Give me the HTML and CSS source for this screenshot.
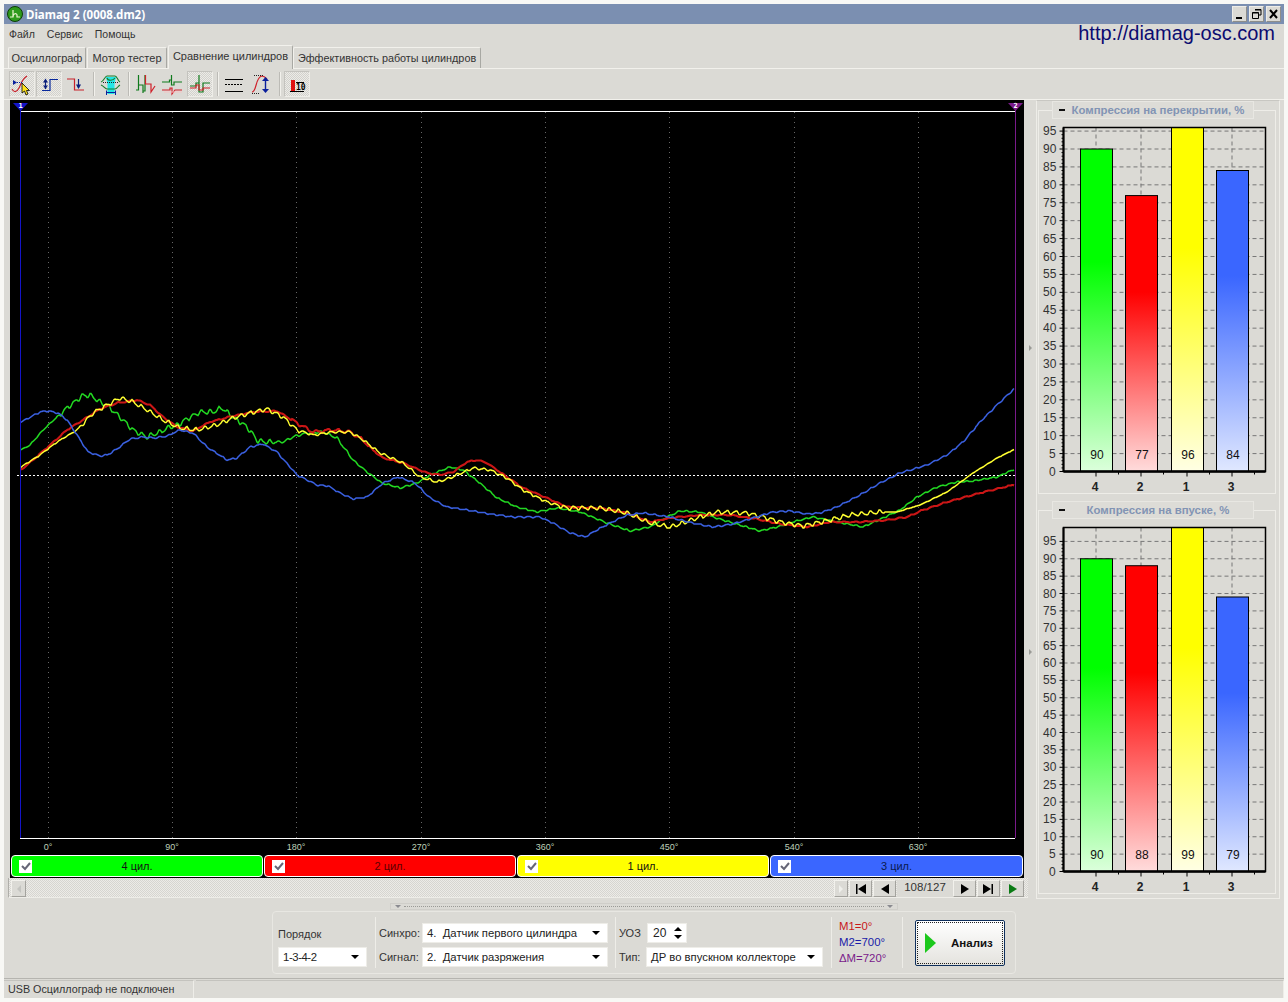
FILE: index.html
```html
<!DOCTYPE html>
<html lang="ru">
<head>
    <meta charset="UTF-8">
    <title>Diamag 2 (0008.dm2)</title>
    <link rel="stylesheet" href="styles.css">
</head>
<body>
    <div class="window">
        <div class="titlebar">
            <svg class="app-icon" width="16" height="16" viewBox="0 0 16 16">
                <circle cx="8" cy="8" r="7.5" fill="#2f9a1c" stroke="#0c3d08"/>
                <path d="M3 11H6V4M6 11C6 7 10 7 10 9V11H13" fill="none" stroke="#eef5d0" stroke-width="1.2"/>
            </svg>
            <span class="title-text">Diamag 2 (0008.dm2)</span>
            <div class="win-buttons">
                <div class="win-btn"><svg width="15" height="16" viewBox="0 0 15 16"><path d="M4 12H10" stroke="#000" stroke-width="2"/></svg></div>
                <div class="win-btn"><svg width="15" height="16" viewBox="0 0 15 16"><path d="M6 3.5H12V9H10M3.5 6.5H9.5V12.5H3.5ZM3.5 7H9.5M6 4H12" fill="none" stroke="#000"/></svg></div>
                <div class="win-btn"><svg width="15" height="16" viewBox="0 0 15 16"><path d="M4 4L11 12M11 4L4 12" stroke="#000" stroke-width="2"/></svg></div>
            </div>
        </div>

        <div class="menubar">
            <span class="menu-item">Файл</span>
            <span class="menu-item">Сервис</span>
            <span class="menu-item">Помощь</span>
            <span class="site-link">http://diamag-osc.com</span>
        </div>

        <div class="tabs">
            <div class="tab tab-1">Осциллограф</div>
            <div class="tab tab-2">Мотор тестер</div>
            <div class="tab tab-3 active">Сравнение цилиндров</div>
            <div class="tab tab-4">Эффективность работы цилиндров</div>
        </div>

        <div class="toolbar">
            <div class="tool pressed"><svg width="26" height="26" viewBox="0 0 26 26">
                <path d="M3 18C5 22 8 21 10 17C12 13 13 8 18 5" fill="none" stroke="#c8202a" stroke-width="1.2"/>
                <path d="M4 9L8 11.500L4 14Z" fill="#0a1f9c"/><path d="M8 11.500H14" stroke="#0a1f9c" stroke-dasharray="1 1"/>
                <path d="M13 12V22L15.500 20L17 24L19 23L17.500 19.500H20.500Z" fill="#ffe21c" stroke="#000" stroke-width=".8"/>
            </svg></div>
            <div class="tool pressed"><svg width="26" height="26" viewBox="0 0 26 26">
                <path d="M6 19.500H14V8.500H22" fill="none" stroke="#0a2a9c" stroke-width="1.2"/>
                <path d="M9.500 9V18" stroke="#0a1f7c" stroke-width="1.2"/>
                <path d="M9.500 7.500L7 11.500H12ZM7 14.500H12L9.500 18Z" fill="#0a1f7c"/>
            </svg></div>
            <div class="tool"><svg width="26" height="26" viewBox="0 0 26 26">
                <path d="M4 8H11.500V19H21" fill="none" stroke="#c8202a" stroke-width="1.2"/>
                <path d="M15.500 8V17" stroke="#0a1f7c" stroke-width="1.2"/><path d="M13 13.500H18L15.500 18Z" fill="#0a1f7c"/>
            </svg></div>
            <div class="tool-sep"></div>
            <div class="tool"><svg width="26" height="26" viewBox="0 0 26 26">
                <path d="M8 6H18L16.500 13V23H9.500V13Z" fill="#22e6e6"/>
                <path d="M3 11C6 10 7 5 9 5H17C19 5 20 10 22 11M3 14C6 15 7 18 9 18H17C19 18 20 15 22 14M9 7C10 10 15 10 17 7" fill="none" stroke="#187a28" stroke-width="1.1"/>
                <path d="M5 11.500H21" stroke="#222" stroke-dasharray="1 1"/>
                <path d="M9 21.500H17M8.500 19.500V24M17.500 19.500V24" stroke="#0a1f9c"/>
            </svg></div>
            <div class="tool-sep"></div>
            <div class="tool"><svg width="26" height="26" viewBox="0 0 26 26">
                <path d="M3 19H5.500V4V14H10V22M10 20H12V4V13" fill="none" stroke="#0f7a1c" stroke-width="1.2"/>
                <path d="M12.500 4V13H18V21L22 15" fill="none" stroke="#d0202a" stroke-width="1.2"/>
            </svg></div>
            <div class="tool"><svg width="26" height="26" viewBox="0 0 26 26">
                <path d="M2 11H9.500V9H11.500V4V14H14V11H22" fill="none" stroke="#0f7a1c" stroke-width="1.2"/>
                <path d="M2 19H10V17H12V23L15 19H22" fill="none" stroke="#d0202a" stroke-width="1.2"/>
                <path d="M4 21H22" stroke="#f6c4c4"/>
            </svg></div>
            <div class="tool pressed"><svg width="26" height="26" viewBox="0 0 26 26">
                <path d="M3 15H9V12H12V4V21H16V12H23" fill="none" stroke="#0f7a1c" stroke-width="1.2"/>
                <path d="M3 17H9V14H12V19H16V17H23" fill="none" stroke="#d0202a" stroke-width="1.2"/>
            </svg></div>
            <div class="tool-sep"></div>
            <div class="tool"><svg width="26" height="26" viewBox="0 0 26 26">
                <path d="M3 8.500H21M3 20.500H21" stroke="#000"/><path d="M3 13.500H21" stroke="#000" stroke-dasharray="2 1"/>
            </svg></div>
            <div class="tool"><svg width="26" height="26" viewBox="0 0 26 26">
                <path d="M3 21C8 21 6 6 13 5C15 5 16 6 18 8" fill="none" stroke="#d0202a" stroke-width="1.2"/>
                <path d="M5 4.500H14M3 22.500H11" stroke="#222" stroke-dasharray="1 1"/>
                <path d="M16.500 8V20" stroke="#0a1f9c" stroke-width="1.4"/><path d="M13 10L16.500 6L20 10ZM13 18H20L16.500 22Z" fill="#0a1f9c"/>
            </svg></div>
            <div class="tool-sep"></div>
            <div class="tool pressed"><svg width="26" height="26" viewBox="0 0 26 26">
                <rect x="7" y="9" width="4" height="11" fill="#e01010"/>
                <path d="M12 11.500H20M6 20.500H20" stroke="#000"/>
                <text x="12" y="19" class="tool-number">10</text>
            </svg></div>
        </div>

        <div class="workspace">
            <div class="scope-col">
                <div class="scope">
                    <svg id="scopeSvg" class="scope-svg" width="1014" height="755" viewBox="10 100 1014 755"></svg>
                    <div class="legend">
                        <div class="legend-item cyl-green"><span class="check"><svg width="10" height="10" viewBox="0 0 10 10"><path d="M1 5L4 8L9 2" fill="none" stroke="#667" stroke-width="2"/></svg></span><span class="legend-label">4 цил.</span></div>
                        <div class="legend-item cyl-red"><span class="check"><svg width="10" height="10" viewBox="0 0 10 10"><path d="M1 5L4 8L9 2" fill="none" stroke="#667" stroke-width="2"/></svg></span><span class="legend-label">2 цил.</span></div>
                        <div class="legend-item cyl-yellow"><span class="check"><svg width="10" height="10" viewBox="0 0 10 10"><path d="M1 5L4 8L9 2" fill="none" stroke="#667" stroke-width="2"/></svg></span><span class="legend-label">1 цил.</span></div>
                        <div class="legend-item cyl-blue"><span class="check"><svg width="10" height="10" viewBox="0 0 10 10"><path d="M1 5L4 8L9 2" fill="none" stroke="#667" stroke-width="2"/></svg></span><span class="legend-label">3 цил.</span></div>
                    </div>
                </div>
                <div class="scrollrow">
                    <div class="nav-btn narrow"><svg width="8" height="10" viewBox="0 0 8 10"><path d="M6 1L2 5L6 9Z" fill="#c4c4c0"/></svg></div>
                    <div class="scroll-track"></div>
                    <div class="nav-btn thin"><svg width="8" height="10" viewBox="0 0 8 10"><path d="M2 1L6 5L2 9Z" fill="#f0f0ec"/></svg></div>
                    <div class="nav-btn"><svg width="13" height="10" viewBox="0 0 13 10"><path d="M2 0H3.500V10H2ZM12 0V10L4 5Z"/></svg></div>
                    <div class="nav-btn"><svg width="13" height="10" viewBox="0 0 13 10"><path d="M11 0V10L3 5Z"/></svg></div>
                    <div class="page-count">108/127</div>
                    <div class="nav-btn"><svg width="13" height="10" viewBox="0 0 13 10"><path d="M3 0V10L11 5Z"/></svg></div>
                    <div class="nav-btn"><svg width="13" height="10" viewBox="0 0 13 10"><path d="M1 0V10L9 5ZM9.500 0H11V10H9.500Z"/></svg></div>
                    <div class="nav-btn"><svg width="13" height="10" viewBox="0 0 13 10"><path d="M3 0V10L11 5Z" fill="#0a7a14"/></svg></div>
                </div>
            </div>

            <div class="v-split"><span class="split-arrow"></span><span class="split-arrow"></span></div>

            <div class="side">
                <div class="gauge">
                    <div class="gauge-title"><span class="minus"></span><span class="gauge-name">Компрессия на перекрытии, %</span></div>
                    <svg id="chartOverlap" class="chart" width="236" height="374"></svg>
                </div>
                <div class="gauge">
                    <div class="gauge-title"><span class="minus"></span><span class="gauge-name">Компрессия на впуске, %</span></div>
                    <svg id="chartIntake" class="chart" width="236" height="374"></svg>
                </div>
            </div>
        </div>

        <div class="bottom">
            <div class="h-split"><span class="split-tri"></span><span class="split-dots"></span><span class="split-tri"></span></div>
            <div class="controls">
                <div class="group group-order">
                    <div class="order-label">Порядок</div>
                    <div class="combo combo-order"><span>1-3-4-2</span><i class="arrow"></i></div>
                </div>
                <div class="group group-signal">
                    <div class="row"><label class="lbl lbl-signal">Синхро:</label><div class="combo combo-signal"><span>4.&nbsp; Датчик первого цилиндра</span><i class="arrow"></i></div></div>
                    <div class="row"><label class="lbl lbl-signal">Сигнал:</label><div class="combo combo-signal"><span>2.&nbsp; Датчик разряжения</span><i class="arrow"></i></div></div>
                </div>
                <div class="group group-type">
                    <div class="row"><label class="lbl lbl-uoz">УОЗ</label><div class="spin"><span>20</span><span class="spin-arrows"><i class="arrow up"></i><i class="arrow"></i></span></div></div>
                    <div class="row"><label class="lbl lbl-type">Тип:</label><div class="combo combo-type"><span>ДР во впускном коллекторе</span><i class="arrow"></i></div></div>
                </div>
                <div class="group group-marks">
                    <div class="mark mark-red">M1=0°</div>
                    <div class="mark mark-blue">M2=700°</div>
                    <div class="mark mark-purple">ΔM=720°</div>
                </div>
                <div class="analyze">
                    <div class="analyze-inner">
                        <i class="play"></i>
                        <span>Анализ</span>
                    </div>
                </div>
            </div>
        </div>

        <div class="statusbar">
            <div class="pane pane-first">USB Осциллограф не подключен</div>
            <div class="pane pane-rest"></div>
        </div>
    </div>
    <script src="script.js"></script>
</body>
</html>
```

FILE: styles.css
```css
* {
    box-sizing: border-box;
}
body {
    margin: 0;
    background-color: #f8f8f5;
    font-family: 'Liberation Sans', Arial, sans-serif;
    font-size: 11px;
    color: #222;
}
.window {
    margin: 4px 0 0 4px;
    width: 1280px;
    height: 994px;
    display: flex;
    flex-direction: column;
    background-color: #dbdad5;
}

/* title bar */
.titlebar {
    height: 20px;
    flex: none;
    display: flex;
    align-items: center;
    padding-left: 3px;
    background-color: #7b8fb1;
}
.title-text {
    margin-left: 3px;
    font-family: 'Noto Sans', sans-serif;
    font-size: 11.5px;
    font-weight: bold;
    color: #fff;
}
.win-buttons {
    margin-left: auto;
    margin-right: 3px;
    display: flex;
    gap: 2px;
}
.win-btn {
    width: 15px;
    height: 16px;
    background-color: #dbdad5;
    border: 1px solid #eeede8;
    border-right-color: #8e8e8a;
    border-bottom-color: #8e8e8a;
    display: flex;
    overflow: hidden;
}
.win-btn svg {
    flex: none;
    margin: -1px;
}

/* menu */
.menubar {
    height: 20px;
    flex: none;
    display: flex;
    align-items: center;
    padding-left: 5px;
    gap: 12px;
    font-size: 10.5px;
    color: #333;
    position: relative;
}
.site-link {
    position: absolute;
    right: 9px;
    top: -2px;
    font-size: 20px;
    color: #0b0b70;
}

/* tabs */
.tabs {
    height: 25px;
    flex: none;
    display: flex;
    align-items: flex-end;
    padding-left: 4px;
    border-bottom: 1px solid #f2f1ec;
}
.tab {
    height: 21px;
    padding-top: 4px;
    text-align: center;
    background-color: #dbdad5;
    border: 1px solid #f2f1ec;
    border-bottom: none;
    border-right-color: #a8a8a3;
    border-radius: 2px 2px 0 0;
    margin-right: 1px;
    color: #333;
}
.tab-1 { width: 78px; }
.tab-2 { width: 80px; }
.tab-3 { width: 125px; }
.tab-4 { width: 188px; font-size: 10.8px; }
.tab.active {
    height: 24px;
    padding-top: 4px;
    margin-bottom: -1px;
    margin-right: 0;
    border-color: #f2f1ec;
    border-right-color: #a8a8a3;
}

/* toolbar */
.toolbar {
    height: 30px;
    flex: none;
    display: flex;
    align-items: center;
    padding-left: 5px;
    gap: 1px;
}
.tool {
    width: 26px;
    height: 26px;
    display: flex;
    flex: none;
}
.tool.pressed {
    background-color: #e6e5e1;
    background-image: repeating-conic-gradient(#d2d1cc 0 25%, #ecebe7 0 50%);
    background-size: 2px 2px;
    border: 1px solid #eeede8;
    border-top-color: #c4c3be;
    border-left-color: #c4c3be;
}
.tool.pressed svg {
    margin: -1px;
    flex: none;
}
.tool-sep {
    width: 2px;
    height: 24px;
    margin: 0 2px 0 3px;
    border-left: 1px solid #bcbbb6;
    border-right: 1px solid #f2f1ec;
}
.tool-number {
    font-family: 'DejaVu Sans Mono', monospace;
    font-weight: bold;
    font-size: 8px;
}

/* workspace */
.workspace {
    height: 800px;
    flex: none;
    display: flex;
    border-top: 1px solid #f2f1ec;
}
.scope-col {
    width: 1020px;
    margin-left: 4px;
    flex: none;
}
.scope {
    margin-left: 2px;
    width: 1014px;
    height: 778px;
    background-color: #000;
}
.scope-svg {
    display: block;
}
.axis-deg {
    font-size: 9px;
    fill: #bfd0b8;
    text-anchor: middle;
}
.marker-num {
    font-family: 'DejaVu Sans Mono', monospace;
    font-size: 7px;
    font-weight: bold;
    fill: #fff;
    text-anchor: middle;
}
.legend {
    display: flex;
    padding-left: 1px;
    gap: 1px;
    height: 23px;
}
.legend-item {
    width: 252px;
    height: 22px;
    border: 1px solid #fff;
    border-radius: 4px;
    display: flex;
    align-items: center;
    padding-left: 7px;
    color: #141414;
}
.legend-item:last-child {
    width: 253px;
}
.cyl-green { background-color: #00ff00; }
.cyl-red { background-color: #ff0000; color: #5c0000; }
.cyl-yellow { background-color: #ffff00; }
.cyl-blue { background-color: #3a66ff; color: #0a1a50; }
.check {
    width: 13px;
    height: 13px;
    background-color: #fff;
    display: flex;
    align-items: center;
    justify-content: center;
    flex: none;
}
.legend-label {
    flex: 1;
    text-align: center;
    margin-right: 20px;
}
.scrollrow {
    height: 20px;
    display: flex;
    align-items: flex-start;
    padding: 2px 3px 0 2px;
    background-image: repeating-conic-gradient(#d6d5d0 0 25%, #ecebe7 0 50%);
    background-size: 2px 2px;
    border-bottom: 1px solid #eeede8;
    border-left: 1px solid #b0afaa;
}
.scroll-track {
    flex: 1;
}
.nav-btn {
    width: 23px;
    height: 17px;
    margin-right: 1px;
    flex: none;
    background-color: #dbdad5;
    border: 1px solid #f2f1ec;
    border-right-color: #a3a29d;
    border-bottom-color: #a3a29d;
    display: flex;
    align-items: center;
    justify-content: center;
}
.nav-btn.narrow {
    width: 15px;
}
.nav-btn.thin {
    width: 14px;
}
.page-count {
    width: 56px;
    height: 17px;
    text-align: center;
    font-size: 11.5px;
    line-height: 15px;
    background-color: #dbdad5;
    color: #333;
}
.v-split {
    width: 8px;
    flex: none;
    position: relative;
}
.split-arrow {
    position: absolute;
    left: 1px;
    top: 245px;
    width: 0;
    height: 0;
    border: 3px solid transparent;
    border-left-color: #9a9a96;
}
.split-arrow + .split-arrow {
    top: 549px;
}

/* side charts */
.side {
    width: 244px;
    height: 799px;
    flex: none;
    border: 1px solid #eeede8;
    border-top-color: #c8c7c2;
    padding: 9px 3px 0 1px;
}
.gauge {
    width: 238px;
    height: 384px;
    border: 1px solid #eeede8;
    margin-bottom: 16px;
}
.gauge-title {
    height: 18px;
    margin: -10px 21px 0 13px;
    background-color: #dddcd7;
    border: 1px solid #e8e7e2;
    display: flex;
    align-items: center;
    padding-left: 6px;
}
.minus {
    width: 6px;
    height: 2px;
    background-color: #111;
    flex: none;
}
.gauge-name {
    flex: 1;
    text-align: center;
    white-space: nowrap;
    padding-right: 2px;
    font-size: 11.4px;
    font-weight: bold;
    color: #8294b4;
}
.chart {
    display: block;
}
.chart-num {
    font-size: 12px;
    fill: #333;
}
.chart-cat {
    font-size: 12px;
    font-weight: bold;
    fill: #222;
    text-anchor: middle;
}
.chart-val {
    font-size: 12px;
    fill: #111;
    text-anchor: middle;
}

/* bottom panel */
.bottom {
    height: 79px;
    flex: none;
    display: flex;
    flex-direction: column;
    align-items: center;
}
.h-split {
    width: 508px;
    height: 7px;
    margin-top: 4px;
    border: 1px solid #cfcec9;
    display: flex;
    align-items: center;
    padding: 0 4px;
    gap: 3px;
    margin-bottom: 1px;
}
.split-tri {
    width: 0;
    height: 0;
    border: 3px solid transparent;
    border-top-color: #8a8a90;
    margin-top: 3px;
    flex: none;
}
.split-dots {
    flex: 1;
    border-top: 1px dotted #9a9a96;
}
.controls {
    width: 744px;
    height: 63px;
    display: flex;
    border: 1px solid #e8e7e2;
    border-radius: 4px;
    color: #333;
}
.group {
    margin: 5px 0;
    padding-top: 6px;
    border-right: 1px solid #eeede8;
}
.group-order {
    width: 103px;
    padding: 11px 0 0 5px;
}
.order-label {
    height: 19px;
}
.group-signal {
    width: 240px;
    padding-left: 3px;
}
.group-type {
    width: 216px;
    padding-left: 3px;
}
.group-marks {
    width: 71px;
    padding: 1px 0 0 7px;
    font-size: 11.4px;
    line-height: 16px;
}
.row {
    display: flex;
    align-items: center;
    height: 20px;
    margin-bottom: 4px;
}
.lbl-signal { width: 43px; }
.lbl-uoz { width: 28px; }
.lbl-type { width: 27px; }
.combo, .spin {
    height: 20px;
    background-color: #fff;
    border: 1px solid #eeede8;
    display: flex;
    align-items: center;
    padding: 0 4px;
    color: #222;
    font-size: 11.3px;
    flex: none;
}
.combo .arrow {
    margin-left: auto;
}
.combo-order { width: 89px; }
.combo-order span { letter-spacing: -.4px; }
.combo-signal { width: 186px; }
.combo-type { width: 177px; }
.spin {
    width: 40px;
    justify-content: space-between;
    font-size: 12px;
    padding: 0 4px 0 5px;
}
.arrow {
    width: 0;
    height: 0;
    border: 4px solid transparent;
    border-top: 4px solid #000;
    border-bottom: none;
    margin-right: 3px;
}
.arrow.up {
    border-top: none;
    border-bottom: 4px solid #000;
}
.spin-arrows {
    display: flex;
    flex-direction: column;
    gap: 4px;
}
.spin-arrows .arrow {
    margin-right: 0;
}
.mark-red { color: #c81818; }
.mark-blue { color: #1a1aa8; }
.mark-purple { color: #7a1a8a; }
.analyze {
    width: 90px;
    height: 46px;
    margin: 8px 0 0 12px;
    border: 1px solid #0e2f5c;
    padding: 1px;
    border-radius: 2px;
    background: linear-gradient(#ffffff, #e4e3de);
}
.analyze-inner {
    width: 100%;
    height: 100%;
    border: 1px dotted #222;
    display: flex;
    align-items: center;
    padding-left: 7px;
    font-weight: bold;
    color: #111;
}
.analyze-inner span {
    margin-left: 15px;
    font-size: 11.5px;
}
.play {
    width: 0;
    height: 0;
    border-left: 11px solid #1cc81c;
    border-top: 10px solid transparent;
    border-bottom: 10px solid transparent;
}

/* status bar */
.statusbar {
    height: 21px;
    flex: none;
    display: flex;
    border-top: 1px solid #b5b4af;
    padding-top: 1px;
    color: #333;
}
.pane {
    height: 19px;
    line-height: 17px;
    font-size: 10.75px;
    border-top: 1px solid #c4c3be;
    border-right: 1px solid #eeede8;
    padding-left: 4px;
}
.pane-first {
    width: 190px;
}
.pane-rest {
    flex: 1;
    margin-left: 2px;
}
```

FILE: script.js
```js
const NS = 'http://www.w3.org/2000/svg';

function el(parent, tag, attrs, text) {
    const node = document.createElementNS(NS, tag);
    for (const key in attrs) node.setAttribute(key, attrs[key]);
    if (text !== undefined) node.textContent = text;
    parent.appendChild(node);
    return node;
}

// control points read off the oscillogram, [x, y] in window pixels
const traces = [
    {
        color: '#22d822', width: 1.5, period: 8.5,
        ripple: x => (x < 60 ? 0.5 : x < 275 ? 2 : x < 350 ? 1 : 0.6),
        pts: [[21,450],[30,445],[43,430],[57,417],[67,408],[82,396],[90,395],[100,402],[110,408],[123,420],[133,430],[147,437],[160,432],[170,427],[178,425],[185,420],[200,412],[213,412],[222,408],[233,417],[247,427],[258,441],[267,442],[283,442],[293,437],[307,433],[323,432],[337,438],[353,460],[367,472],[382,483],[400,488],[417,483],[430,475],[450,467],[463,470],[480,483],[497,498],[517,507],[537,512],[557,508],[580,512],[607,523],[630,531],[650,527],[667,517],[680,511],[700,512],[713,517],[733,523],[760,531],[777,527],[793,522],[813,517],[827,520],[843,523],[863,527],[883,518],[900,510],[917,497],[937,487],[957,482],[973,481],[997,477],[1013,470]]
    },
    {
        color: '#cc1616', width: 2, period: 11,
        ripple: x => (x > 290 && x < 370 ? 1.4 : 0.5),
        pts: [[21,470],[33,460],[50,445],[67,430],[83,420],[100,409],[117,403],[137,400],[150,405],[163,417],[177,427],[193,431],[210,422],[233,416],[253,412],[277,411],[297,423],[313,432],[333,430],[350,432],[363,440],[373,450],[383,458],[403,463],[427,473],[440,475],[453,472],[467,462],[477,460],[487,463],[507,477],[523,488],[547,498],[567,507],[600,508],[627,513],[650,522],[670,518],[680,517],[700,515],[730,515],[757,519],[780,524],[807,527],[830,522],[860,522],[887,520],[907,517],[923,510],[947,502],[980,493],[1013,485]]
    },
    {
        color: '#ffff30', width: 1.4, period: 9,
        ripple: x => (x < 80 ? 0.4 : x < 300 ? 1.7 : x < 560 ? 1 : x < 885 ? 1.8 : 0.2),
        pts: [[21,467],[40,455],[57,442],[77,430],[93,413],[107,405],[120,398],[133,402],[147,410],[163,420],[180,428],[197,430],[217,425],[233,418],[250,413],[267,409],[283,417],[297,430],[313,435],[333,432],[350,432],[363,440],[380,453],[403,463],[420,477],[437,482],[450,478],[473,468],[490,470],[507,478],[523,490],[547,502],[567,508],[600,508],[627,513],[650,523],[670,527],[680,524],[697,518],[717,512],[747,513],[763,517],[780,522],[803,526],[830,520],[850,515],[880,512],[897,512],[920,505],[947,492],[973,473],[997,458],[1013,450]]
    },
    {
        color: '#3a60e0', width: 1.5, period: 9,
        ripple: () => 0.6,
        pts: [[21,422],[40,412],[48,411],[58,413],[67,420],[77,435],[88,452],[100,456],[107,455],[117,449],[130,439],[143,437],[155,438],[167,436],[180,430],[193,433],[207,447],[227,460],[237,458],[250,447],[263,444],[277,452],[297,475],[317,485],[328,486],[340,493],[353,499],[367,497],[383,483],[398,477],[415,483],[430,498],[447,507],[467,510],[490,514],[513,517],[540,517],[553,523],[570,533],[585,537],[597,530],[610,523],[627,515],[643,513],[670,517],[680,520],[697,524],[713,527],[733,524],[753,518],[773,512],[790,511],[807,514],[820,513],[837,507],[860,495],[880,483],[900,473],[907,471],[927,465],[947,455],[963,442],[980,422],[997,405],[1013,390]]
    }
];

function tracePoints(trace) {
    const out = [];
    let seg = 0;
    for (let x = trace.pts[0][0]; x <= 1014; x++) {
        while (seg < trace.pts.length - 2 && x > trace.pts[seg + 1][0]) seg++;
        const a = trace.pts[seg], b = trace.pts[seg + 1];
        const base = a[1] + (b[1] - a[1]) * (x - a[0]) / (b[0] - a[0]);
        const amp = trace.ripple(x);
        const wiggle = amp * Math.sin(x * 2 * Math.PI / trace.period) + amp * 0.3 * Math.sin(x * 1.37);
        out.push(x + ',' + Math.round((base + wiggle) * 2) / 2);
    }
    return out.join(' ');
}

function drawScope() {
    const svg = document.getElementById('scopeSvg');
    const gridX = [48, 172, 296, 421, 545, 669, 794, 918];
    const degrees = ['0°', '90°', '180°', '270°', '360°', '450°', '540°', '630°'];

    gridX.forEach((x, i) => {
        el(svg, 'line', { x1: x + .5, y1: 112, x2: x + .5, y2: 838, stroke: '#666', 'stroke-dasharray': '1 4' });
        el(svg, 'text', { x: x, y: 850, class: 'axis-deg' }, degrees[i]);
    });
    el(svg, 'line', { x1: 17, y1: 475.5, x2: 1015, y2: 475.5, stroke: '#fff', 'stroke-dasharray': '2 2' });
    el(svg, 'line', { x1: 20, y1: 111.5, x2: 1015, y2: 111.5, stroke: '#fff' });
    el(svg, 'line', { x1: 20, y1: 838.5, x2: 1015, y2: 838.5, stroke: '#fff' });

    traces.forEach(t => {
        el(svg, 'polyline', { points: tracePoints(t), fill: 'none', stroke: t.color, 'stroke-width': t.width });
    });

    el(svg, 'line', { x1: 20.5, y1: 104, x2: 20.5, y2: 838, stroke: '#1414c8' });
    el(svg, 'line', { x1: 1015.5, y1: 104, x2: 1015.5, y2: 838, stroke: '#7a1a8a' });
    el(svg, 'path', { d: 'M13 103H28L20.500 111Z', fill: '#1414c8' });
    el(svg, 'text', { x: 20.5, y: 108, class: 'marker-num' }, '1');
    el(svg, 'path', { d: 'M1008 103H1023L1015.500 111Z', fill: '#7a1a8a' });
    el(svg, 'text', { x: 1015.5, y: 108, class: 'marker-num' }, '2');
}

const cylinders = [
    { cat: '4', x: 41, color: '#00ff00', pale: '#dcffdc', id: 'g' },
    { cat: '2', x: 86, color: '#ff0000', pale: '#ffdcdc', id: 'r' },
    { cat: '1', x: 132, color: '#ffff00', pale: '#ffffe4', id: 'y' },
    { cat: '3', x: 177, color: '#3a66ff', pale: '#e0e8ff', id: 'b' }
];

function drawChart(id, values, maxValue) {
    const svg = document.getElementById(id);
    const left = 24.5, right = 226.5, top = 8.5, bottom = 352.5;
    const scale = (bottom - top) / maxValue;
    const defs = el(svg, 'defs', {});

    for (let v = 0; v <= 95; v += 5) {
        const y = bottom - v * scale;
        if (v > 0) el(svg, 'line', { x1: left, y1: y, x2: right, y2: y, stroke: '#777', 'stroke-dasharray': '4 3' });
        el(svg, 'line', { x1: left - 4, y1: y, x2: left, y2: y, stroke: '#000' });
        el(svg, 'text', { x: v < 10 ? 10 : 4, y: y + 4, class: 'chart-num' }, v);
        for (let m = 1; m < 5 && v < 95; m++) {
            el(svg, 'line', { x1: left - 2, y1: y - m * scale, x2: left, y2: y - m * scale, stroke: '#000' });
        }
    }

    cylinders.forEach((c, i) => {
        const mid = c.x + 16;
        el(svg, 'line', { x1: mid, y1: top, x2: mid, y2: bottom, stroke: '#777', 'stroke-dasharray': '4 3' });
        el(svg, 'line', { x1: mid, y1: bottom, x2: mid, y2: bottom + 5, stroke: '#000' });
        el(svg, 'line', { x1: mid + 22.5, y1: bottom, x2: mid + 22.5, y2: bottom + 3, stroke: '#000' });

        const grad = el(defs, 'linearGradient', { id: id + c.id, x1: 0, y1: 0, x2: 0, y2: 1 });
        el(grad, 'stop', { offset: '0.35', 'stop-color': c.color });
        el(grad, 'stop', { offset: '1', 'stop-color': c.pale });
        const h = Math.min(values[i] * scale, bottom - top);
        el(svg, 'rect', { x: c.x + .5, y: bottom - h, width: 32, height: h, fill: `url(#${id + c.id})`, stroke: '#000' });
        el(svg, 'text', { x: mid + 1, y: bottom - 13, class: 'chart-val' }, values[i]);
        el(svg, 'text', { x: mid - 1, y: bottom + 19, class: 'chart-cat' }, c.cat);
    });

    el(svg, 'rect', { x: left, y: top, width: right - left, height: bottom - top, fill: 'none', stroke: '#000', 'stroke-width': 1.5 });
    el(svg, 'line', { x1: left, y1: bottom, x2: right, y2: bottom, stroke: '#000', 'stroke-width': 2.5 });
    el(svg, 'line', { x1: left, y1: top, x2: left, y2: bottom, stroke: '#000', 'stroke-width': 2 });
}

drawScope();
drawChart('chartOverlap', [90, 77, 96, 84], 96);
drawChart('chartIntake', [90, 88, 99, 79], 99);
```
